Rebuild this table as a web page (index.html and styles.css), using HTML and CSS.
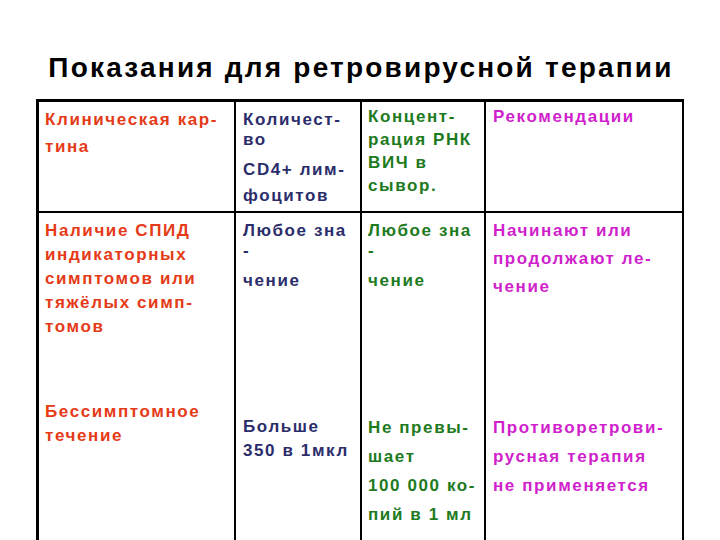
FILE: index.html
```html
<!DOCTYPE html>
<html lang="ru">
<head>
<meta charset="utf-8">
<link rel="stylesheet" href="styles.css">
</head>
<body>
<h1 class="title">Показания для ретровирусной терапии</h1>
<div class="table">
  <div class="cell head c1 lh27 pt4">
    <div>Клиническая кар-</div>
    <div>тина</div>
  </div>
  <div class="cell head c2 lh20 pt8">
    <div>Количест-</div>
    <div>во</div>
    <div class="m10">CD4+ лим-</div>
    <div class="m6">фоцитов</div>
  </div>
  <div class="cell head c3 lh23 pt3">
    <div>Концент-</div>
    <div>рация РНК</div>
    <div>ВИЧ в</div>
    <div>сывор.</div>
  </div>
  <div class="cell head c4 lh20 pt5">
    <div>Рекомендации</div>
  </div>

  <div class="cell mid c1 lh24 pt6">
    <div>Наличие СПИД</div>
    <div>индикаторных</div>
    <div>симптомов или</div>
    <div>тяжёлых симп-</div>
    <div>томов</div>
  </div>
  <div class="cell mid c2 lh20 pt8">
    <div>Любое зна</div>
    <div>-</div>
    <div class="m10">чение</div>
  </div>
  <div class="cell mid c3 lh20 pt8">
    <div>Любое зна</div>
    <div>-</div>
    <div class="m10">чение</div>
  </div>
  <div class="cell mid c4 lh28 pt4">
    <div>Начинают или</div>
    <div>продолжают ле-</div>
    <div>чение</div>
  </div>

  <div class="cell low c1 lh24 pt5">
    <div>Бессимптомное</div>
    <div>течение</div>
  </div>
  <div class="cell low c2 lh24 pt20">
    <div>Больше</div>
    <div>350 в 1мкл</div>
  </div>
  <div class="cell low c3 lh29 pt18">
    <div>Не превы-</div>
    <div>шает</div>
    <div>100 000 ко-</div>
    <div>пий в 1 мл</div>
  </div>
  <div class="cell low c4 lh29 pt18">
    <div>Противоретрови-</div>
    <div>русная терапия</div>
    <div>не применяется</div>
  </div>
</div>
</body>
</html>
```
FILE: styles.css
```css
html, body {
  margin: 0;
  padding: 0;
  background: #ffffff;
  overflow: hidden;
}
body {
  width: 720px;
  height: 540px;
  font-family: "Liberation Sans", Arial, sans-serif;
}
.title {
  margin: 52px 0 0 0;
  height: 32px;
  line-height: 32px;
  font-size: 28px;
  font-weight: bold;
  text-align: center;
  color: #000000;
  letter-spacing: 2.2px;
  padding-left: 2px;
}
.table {
  margin: 15px 0 0 36px;
  width: 648px;
  box-sizing: border-box;
  border: 3px solid #000000;
  border-bottom: none;
  border-right-width: 2px;
  display: grid;
  grid-template-columns: 197px 126px 124px 196px;
  grid-template-rows: 111px 182px 160px;
}
.cell {
  box-sizing: border-box;
  padding-left: 6px;
  font-size: 17px;
  font-weight: bold;
  letter-spacing: 1.6px;
  white-space: nowrap;
}
.c1, .c2, .c3 { border-right: 2px solid #000000; }
.head { border-bottom: 2px solid #000000; }
.c1 { color: #e53a17; }
.c2 { color: #2b2d6b; padding-left: 7px; }
.c3 { color: #1d7a1d; }
.c4 { color: #d01fcc; padding-left: 7px; }
.lh20 { line-height: 20px; }
.lh23 { line-height: 23px; }
.lh24 { line-height: 24px; }
.lh27 { line-height: 27px; }
.lh28 { line-height: 28px; }
.lh29 { line-height: 29px; }
.pt3 { padding-top: 3px; }
.pt4 { padding-top: 4px; }
.pt5 { padding-top: 5px; }
.pt6 { padding-top: 6px; }
.pt8 { padding-top: 8px; }
.pt18 { padding-top: 18px; }
.pt20 { padding-top: 20px; }
.m6 { margin-top: 6px; }
.m10 { margin-top: 10px; }
```
